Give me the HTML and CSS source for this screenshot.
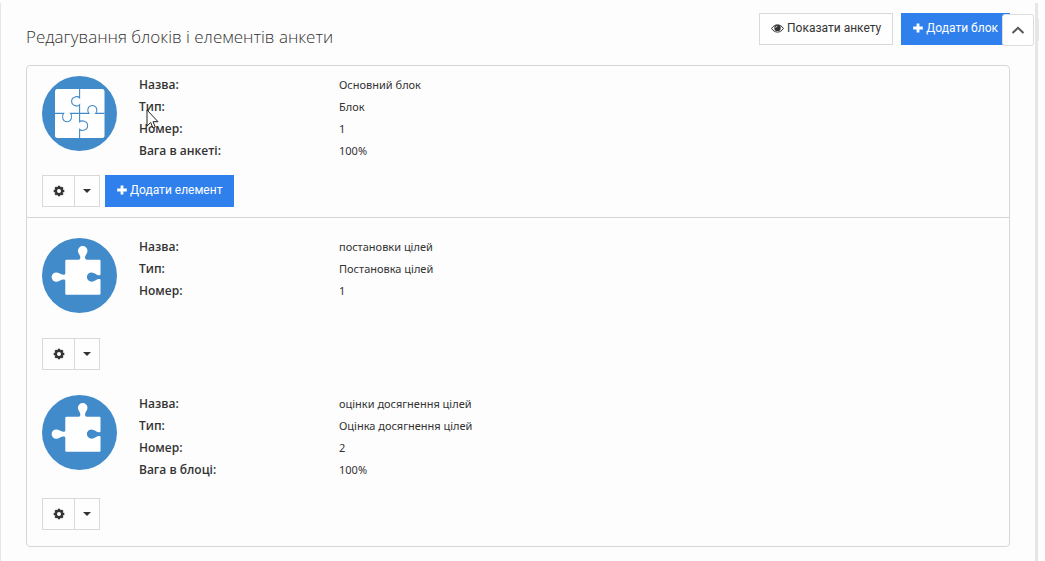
FILE: index.html
```html
<!DOCTYPE html>
<html lang="uk">
<head>
<meta charset="utf-8">
<title>Редагування блоків і елементів анкети</title>
<link rel="stylesheet" href="styles.css">
</head>
<body>
<svg class="sprite" aria-hidden="true">
  <symbol id="puzzle-group" viewBox="0 0 75 75">
    <circle cx="37.5" cy="37.5" r="37.5" fill="#428bca"/>
    <rect x="13" y="13" width="49.5" height="49" rx="2.5" fill="#fff"/>
    <g fill="none" stroke="#428bca" stroke-width="1.1">
      <path d="M37.6 13V21.800C36 19.800 29.600 20.500 29.600 25.300S36 30.800 37.600 28.800V45.800C39.500 44 45.600 45 45.600 49.700S39.500 55.400 37.600 53.500V62"/>
      <path d="M13 37.400H21.600C19.600 39.500 20.300 45.700 25 45.700S30.600 39.500 28.600 37.400H46.800C44.800 35.500 45.500 29.500 50.300 29.500S55.800 35.500 53.800 37.400H62.500"/>
    </g>
  </symbol>
  <symbol id="puzzle-piece" viewBox="0 0 75 75">
    <circle cx="37.5" cy="37.5" r="37.5" fill="#428bca"/>
    <path fill="#fff" d="M24.300 21.700H36.500C38.200 21.700 38.700 20 38.200 18.500C37.700 16.700 35.900 15 35.900 12.800A4.800 4.800 0 0 1 45.500 12.800C45.500 15 43.700 16.700 43.200 18.500C42.700 20 43.200 21.700 45 21.700H57.500Q58.500 21.700 58.500 22.700V36.200C58.500 37.200 57.500 37.400 56.500 37.200C54.300 37 52.500 34.500 49.500 34.500A4.600 4.600 0 0 0 49.500 43.700C52.500 43.700 54.300 41.200 56.500 41C57.500 40.800 58.500 41 58.500 42V55.700Q58.500 56.700 57.500 56.700H24.300Q23.300 56.700 23.300 55.700V43C23.300 41.300 21.700 41.200 20.500 41.600C18.500 42.200 16.800 43.800 14.300 43.800A4.700 4.700 0 0 1 14.300 34.400C16.800 34.400 18.500 36 20.500 36.600C21.700 37 23.300 36.900 23.300 35.200V22.700Q23.300 21.700 24.300 21.700Z"/>
  </symbol>
  <symbol id="gear" viewBox="0 0 12 12">
    <g fill="#333">
      <path d="M4.800 .7H7.200V11.300H4.800ZM.7 4.800H11.300V7.200H.7Z"/>
      <path d="M4.800 .7H7.200V11.300H4.800ZM.7 4.800H11.300V7.200H.7Z" transform="rotate(45 6 6)"/>
      <circle cx="6" cy="6" r="4.200"/>
    </g>
    <circle cx="6" cy="6" r="2" fill="#fff"/>
  </symbol>
  <symbol id="plus" viewBox="0 0 10 10">
    <path fill="#fff" d="M3.600 .5H6.400V3.600H9.800V6.400H6.400V9.500H3.600V6.400H.2V3.600H3.600Z"/>
  </symbol>
  <symbol id="caret" viewBox="0 0 8 4">
    <path fill="#333" d="M0 0H8L4 4Z"/>
  </symbol>
</svg>

<main class="page">
  <header class="page-header">
    <h1 class="title">Редагування блоків і елементів анкети</h1>
    <div class="actions">
      <button class="btn" type="button">
        <svg class="icon-eye" viewBox="0 0 13 9" aria-hidden="true">
          <path fill="none" stroke="#333" stroke-width="1" d="M.6 4.500C2 2.200 4.100.9 6.500.9S11 2.200 12.400 4.500C11 6.800 8.900 8.100 6.500 8.100S2 6.800.6 4.500Z"/>
          <circle cx="6.500" cy="3.900" r="3.200" fill="#333"/>
          <path fill="none" stroke="#fff" stroke-width=".7" d="M4.700 3.900A1.800 1.800 0 0 1 6.500 2.100"/>
        </svg>
        Показати анкету
      </button>
      <button class="btn primary" type="button">
        <svg class="icon-plus" aria-hidden="true"><use href="#plus"/></svg>
        Додати блок
      </button>
    </div>
  </header>

  <div class="panel">
    <section class="block">
      <div class="info">
        <svg class="badge" aria-hidden="true"><use href="#puzzle-group"/></svg>
        <dl class="details">
          <dt>Назва:</dt><dd>Основний блок</dd>
          <dt>Тип:</dt><dd>Блок</dd>
          <dt>Номер:</dt><dd>1</dd>
          <dt>Вага в анкеті:</dt><dd>100%</dd>
        </dl>
      </div>
      <div class="toolbar">
        <div class="split">
          <button class="btn gear" type="button" aria-label="Налаштування"><svg class="icon-gear"><use href="#gear"/></svg></button>
          <button class="btn more" type="button" aria-label="Меню"><svg class="icon-caret"><use href="#caret"/></svg></button>
        </div>
        <button class="btn primary" type="button">
          <svg class="icon-plus" aria-hidden="true"><use href="#plus"/></svg>
          Додати елемент
        </button>
      </div>
    </section>

    <div class="elements">
      <section class="element">
        <div class="info">
          <svg class="badge" aria-hidden="true"><use href="#puzzle-piece"/></svg>
          <dl class="details">
            <dt>Назва:</dt><dd>постановки цілей</dd>
            <dt>Тип:</dt><dd>Постановка цілей</dd>
            <dt>Номер:</dt><dd>1</dd>
          </dl>
        </div>
        <div class="toolbar">
          <div class="split">
            <button class="btn gear" type="button" aria-label="Налаштування"><svg class="icon-gear"><use href="#gear"/></svg></button>
            <button class="btn more" type="button" aria-label="Меню"><svg class="icon-caret"><use href="#caret"/></svg></button>
          </div>
        </div>
      </section>
      <section class="element">
        <div class="info">
          <svg class="badge" aria-hidden="true"><use href="#puzzle-piece"/></svg>
          <dl class="details">
            <dt>Назва:</dt><dd>оцінки досягнення цілей</dd>
            <dt>Тип:</dt><dd>Оцінка досягнення цілей</dd>
            <dt>Номер:</dt><dd>2</dd>
            <dt>Вага в блоці:</dt><dd>100%</dd>
          </dl>
        </div>
        <div class="toolbar">
          <div class="split">
            <button class="btn gear" type="button" aria-label="Налаштування"><svg class="icon-gear"><use href="#gear"/></svg></button>
            <button class="btn more" type="button" aria-label="Меню"><svg class="icon-caret"><use href="#caret"/></svg></button>
          </div>
        </div>
      </section>
    </div>
  </div>
</main>

<button class="to-top" type="button" aria-label="Вгору">
  <svg class="icon-up" viewBox="0 0 14 8"><path d="M1.500 7 7 1.800 12.500 7" fill="none" stroke="#555" stroke-width="2"/></svg>
</button>
<div class="scroll-thumb"></div>
<svg class="cursor" viewBox="0 0 13 20" aria-hidden="true">
  <path d="M1 1V17L4.700 13.500 7 19 9.300 18 7 12.700H12Z" fill="#fff" stroke="#222" stroke-width="1"/>
</svg>
</body>
</html>
```
FILE: styles.css
```css
* {
  box-sizing: border-box;
}

body {
  margin: 0;
  min-height: 100vh;
  display: flex;
  padding: 3px 7px 0 0;
  background: #fdfdfd;
  color: #333;
  font: 12px/22px "Open Sans", "Noto Sans", sans-serif;
}

.sprite {
  position: absolute;
  width: 0;
  height: 0;
}

.page {
  flex: 1;
  border-left: 1px solid #e6e6e6;
  border-right: 3px solid #e6e6e6;
  padding: 10px 25px 14px;
}

.page-header {
  display: flex;
  justify-content: space-between;
  margin-bottom: 14px;
}

.title {
  margin: 10px 0 0;
  font-size: 17px;
  line-height: 28px;
  font-weight: 300;
}

.actions {
  display: flex;
  gap: 8px;
  align-items: flex-start;
}

.btn {
  display: inline-flex;
  align-items: center;
  justify-content: center;
  gap: 3px;
  height: 32px;
  padding: 0 11px 2px;
  border: 1px solid #d9d9d9;
  background: #fefefe;
  color: #333;
  font: 12px/18px Roboto, sans-serif;
  white-space: nowrap;
}

.primary {
  border-color: #2f80ed;
  background: #2f80ed;
  color: #fff;
}

.icon-eye {
  width: 13px;
  height: 9px;
}

.icon-plus {
  width: 10px;
  height: 10px;
}

.icon-gear {
  width: 12px;
  height: 12px;
}

.icon-caret {
  width: 8px;
  height: 4px;
}

.panel {
  border: 1px solid #d6d6d6;
  border-radius: 4px;
}

.block {
  padding: 8px 15px 10px;
  border-bottom: 1px solid #d6d6d6;
}

.elements {
  padding: 18px 15px 16px;
}

.element + .element {
  margin-top: 23px;
}

.info {
  display: flex;
  gap: 22px;
  min-height: 88px;
}

.badge {
  flex: none;
  width: 75px;
  height: 75px;
  margin-top: 2px;
}

.details {
  flex: 1;
  display: grid;
  grid-template-columns: 200px 1fr;
  grid-auto-rows: 22px;
  margin: 0;
}

.details dt {
  font-weight: 600;
}

.details dd {
  margin: 0;
  font-family: "Noto Sans", sans-serif;
  font-size: 11px;
}

.toolbar {
  display: flex;
  gap: 5px;
  margin-top: 13px;
}

.element .toolbar {
  margin-top: 14px;
}

.element + .element .toolbar {
  margin-top: 17px;
}

.split {
  display: flex;
}

.gear,
.more {
  padding: 0;
}

.gear {
  width: 33px;
}

.more {
  width: 26px;
  margin-left: -1px;
}

.to-top {
  position: absolute;
  top: 14px;
  right: 11px;
  width: 32px;
  height: 32px;
  display: flex;
  align-items: center;
  justify-content: center;
  padding: 0;
  border: 1px solid #ddd;
  border-radius: 3px;
  background: #fff;
}

.icon-up {
  width: 14px;
  height: 8px;
}

.scroll-thumb {
  position: absolute;
  top: 19px;
  right: 6px;
  width: 3px;
  height: 22px;
  background: #e6e6e6;
}

.cursor {
  position: absolute;
  left: 146px;
  top: 109px;
  width: 13px;
  height: 20px;
}
```
